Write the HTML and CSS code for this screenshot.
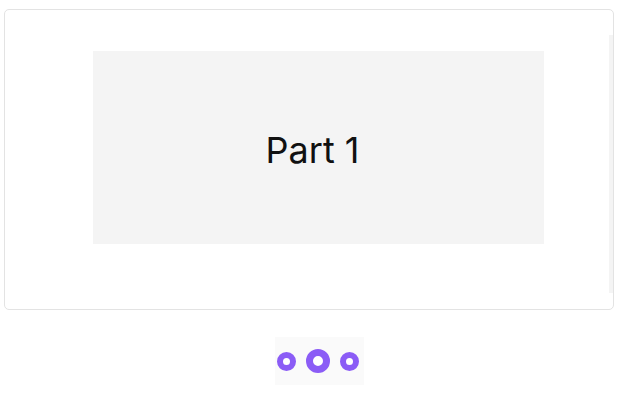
FILE: index.html
```html
<!DOCTYPE html>
<html>
<head>
<meta charset="utf-8">
<link rel="stylesheet" href="styles.css">
</head>
<body>
<div class="page">
  <div class="card">
    <div class="slide"><span class="label">Part 1</span></div>
    <div class="slide next"></div>
  </div>
  <div class="dots">
    <span class="dot"></span>
    <span class="dot active"></span>
    <span class="dot"></span>
  </div>
</div>
</body>
</html>
```
FILE: styles.css
```css
html, body {
  margin: 0;
  padding: 0;
  background: #ffffff;
  font-family: Inter, "Noto Sans", sans-serif;
}
.page {
  padding: 9px 9px 0 4px;
}
.card {
  box-sizing: border-box;
  width: 610px;
  height: 301px;
  border: 1px solid #e3e3e3;
  border-radius: 5px;
  overflow: hidden;
  display: flex;
  align-items: flex-start;
}
.slide {
  flex: none;
  margin-left: 88px;
  margin-top: 41px;
  width: 451px;
  height: 193px;
  background: #f4f4f4;
  display: flex;
  align-items: center;
  justify-content: center;
}
.slide.next {
  margin-left: 65px;
  margin-top: 25px;
  width: 100px;
  height: 258px;
}
.label {
  font-size: 36px;
  color: #111111;
  margin-left: -12px;
  margin-top: 4px;
}
.dots {
  margin-top: 27px;
  margin-left: 271px;
  width: 89px;
  height: 48px;
  box-sizing: border-box;
  background: #fafafa;
  display: flex;
  align-items: center;
  padding-left: 2px;
  gap: 10px;
}
.dot {
  flex: none;
  box-sizing: border-box;
  width: 19px;
  height: 19px;
  border: 6px solid #8b5cf6;
  border-radius: 50%;
  background: #ffffff;
}
.dot.active {
  width: 24px;
  height: 24px;
  border-width: 7px;
}
```
